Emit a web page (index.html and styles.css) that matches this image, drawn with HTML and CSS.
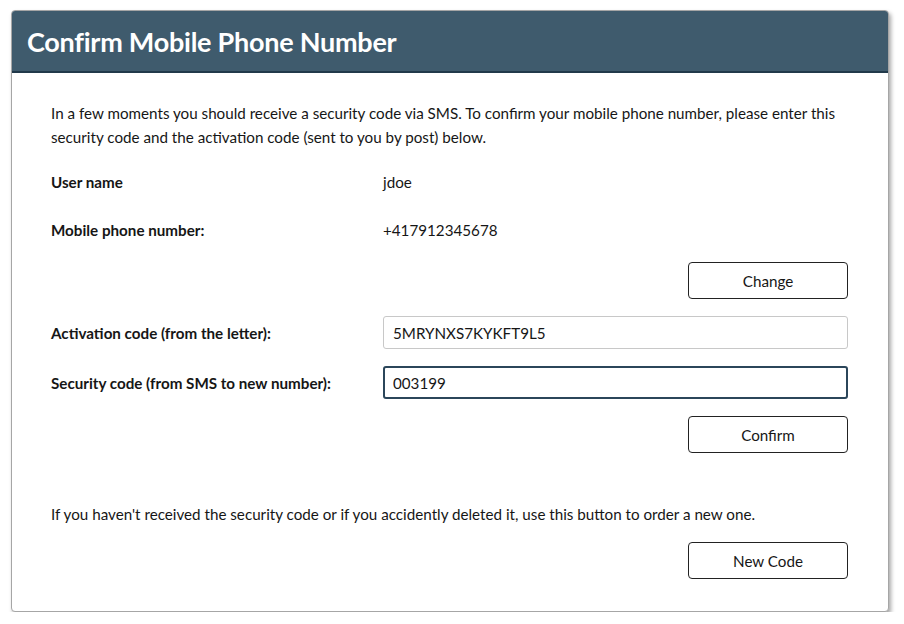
FILE: index.html
```html
<!DOCTYPE HTML>
<html lang="en">
<head>
    <title>Confirm Mobile Phone Number</title>
    <link rel="stylesheet" href="styles.css">
</head>
<body>

<div class="panel">
    <div class="panel-header">
        <h1 class="panel-title">Confirm Mobile Phone Number</h1>
    </div>
    <div class="panel-body">
        <p class="intro">In a few moments you should receive a security code via SMS. To confirm your mobile phone number, please enter this security code and the activation code (sent to you by post) below.</p>

        <div class="info-row">
            <span class="field-label">User name</span>
            <span class="field-value">jdoe</span>
        </div>
        <div class="info-row">
            <span class="field-label">Mobile phone number:</span>
            <span class="field-value">+417912345678</span>
        </div>
        <div class="button-row">
            <button class="outline-button">Change</button>
        </div>

        <div class="input-row">
            <label class="field-label" for="activation">Activation code (from the letter):</label>
            <input id="activation" type="text" class="text-input" value="5MRYNXS7KYKFT9L5">
        </div>
        <div class="input-row">
            <label class="field-label" for="security">Security code (from SMS to new number):</label>
            <input id="security" type="text" class="text-input focused" value="003199">
        </div>
        <div class="button-row">
            <button class="outline-button">Confirm</button>
        </div>

        <p class="hint">If you haven't received the security code or if you accidently deleted it, use this button to order a new one.</p>
        <div class="button-row">
            <button class="outline-button">New Code</button>
        </div>
    </div>
</div>

</body>
</html>
```

FILE: styles.css
```css
:root {
    --header-color: #3f5b6d;
    --header-border: #21394a;
    --text-color: #161616;
    --border-color: #a6a6a6;
    --focus-color: #2b465a;
}

body {
    margin: 0;
    background-color: white;
    color: var(--text-color);
    font-family: 'Lato', sans-serif;
    font-size: 15.2px;
}

.panel {
    width: 876px;
    margin: 10px 0 0 11px;
    border: 1px solid var(--border-color);
    border-radius: 4px;
    background-color: white;
    box-shadow: 2px 3px 4px rgba(0, 0, 0, 0.35);
    overflow: hidden;
}

.panel-header {
    background-color: var(--header-color);
    border-bottom: 2px solid var(--header-border);
    box-sizing: border-box;
    height: 62px;
    display: flex;
    align-items: center;
    padding-left: 15px;
}

.panel-title {
    margin: 0;
    color: white;
    font-size: 27px;
    font-weight: 700;
    letter-spacing: -0.25px;
}

.panel-body {
    padding: 28px 40px 32px 39px;
}

.intro,
.hint {
    margin: 0;
    line-height: 24px;
}

.hint {
    margin-top: 49px;
}

.info-row {
    display: grid;
    grid-template-columns: 332px 1fr;
    align-items: center;
    height: 48px;
}

.intro + .info-row {
    margin-top: 9px;
}

.field-label {
    font-weight: 700;
}

.input-row {
    display: grid;
    grid-template-columns: 332px 1fr;
    align-items: center;
    margin-top: 17px;
}

.text-input {
    height: 33px;
    box-sizing: border-box;
    border: 1px solid #c8c8c8;
    border-radius: 3px;
    padding: 0 9px;
    font-family: inherit;
    font-size: 15.2px;
    color: var(--text-color);
    outline: none;
}

.text-input.focused {
    border: 2px solid var(--focus-color);
    padding: 0 8px;
}

.button-row {
    display: flex;
    justify-content: flex-end;
    margin-top: 8px;
}

.input-row + .button-row {
    margin-top: 17px;
}

.hint + .button-row {
    margin-top: 16px;
}

.outline-button {
    width: 160px;
    height: 37px;
    background-color: white;
    border: 1px solid #222;
    border-radius: 4px;
    font-family: inherit;
    font-size: 15.2px;
    color: var(--text-color);
}
```
